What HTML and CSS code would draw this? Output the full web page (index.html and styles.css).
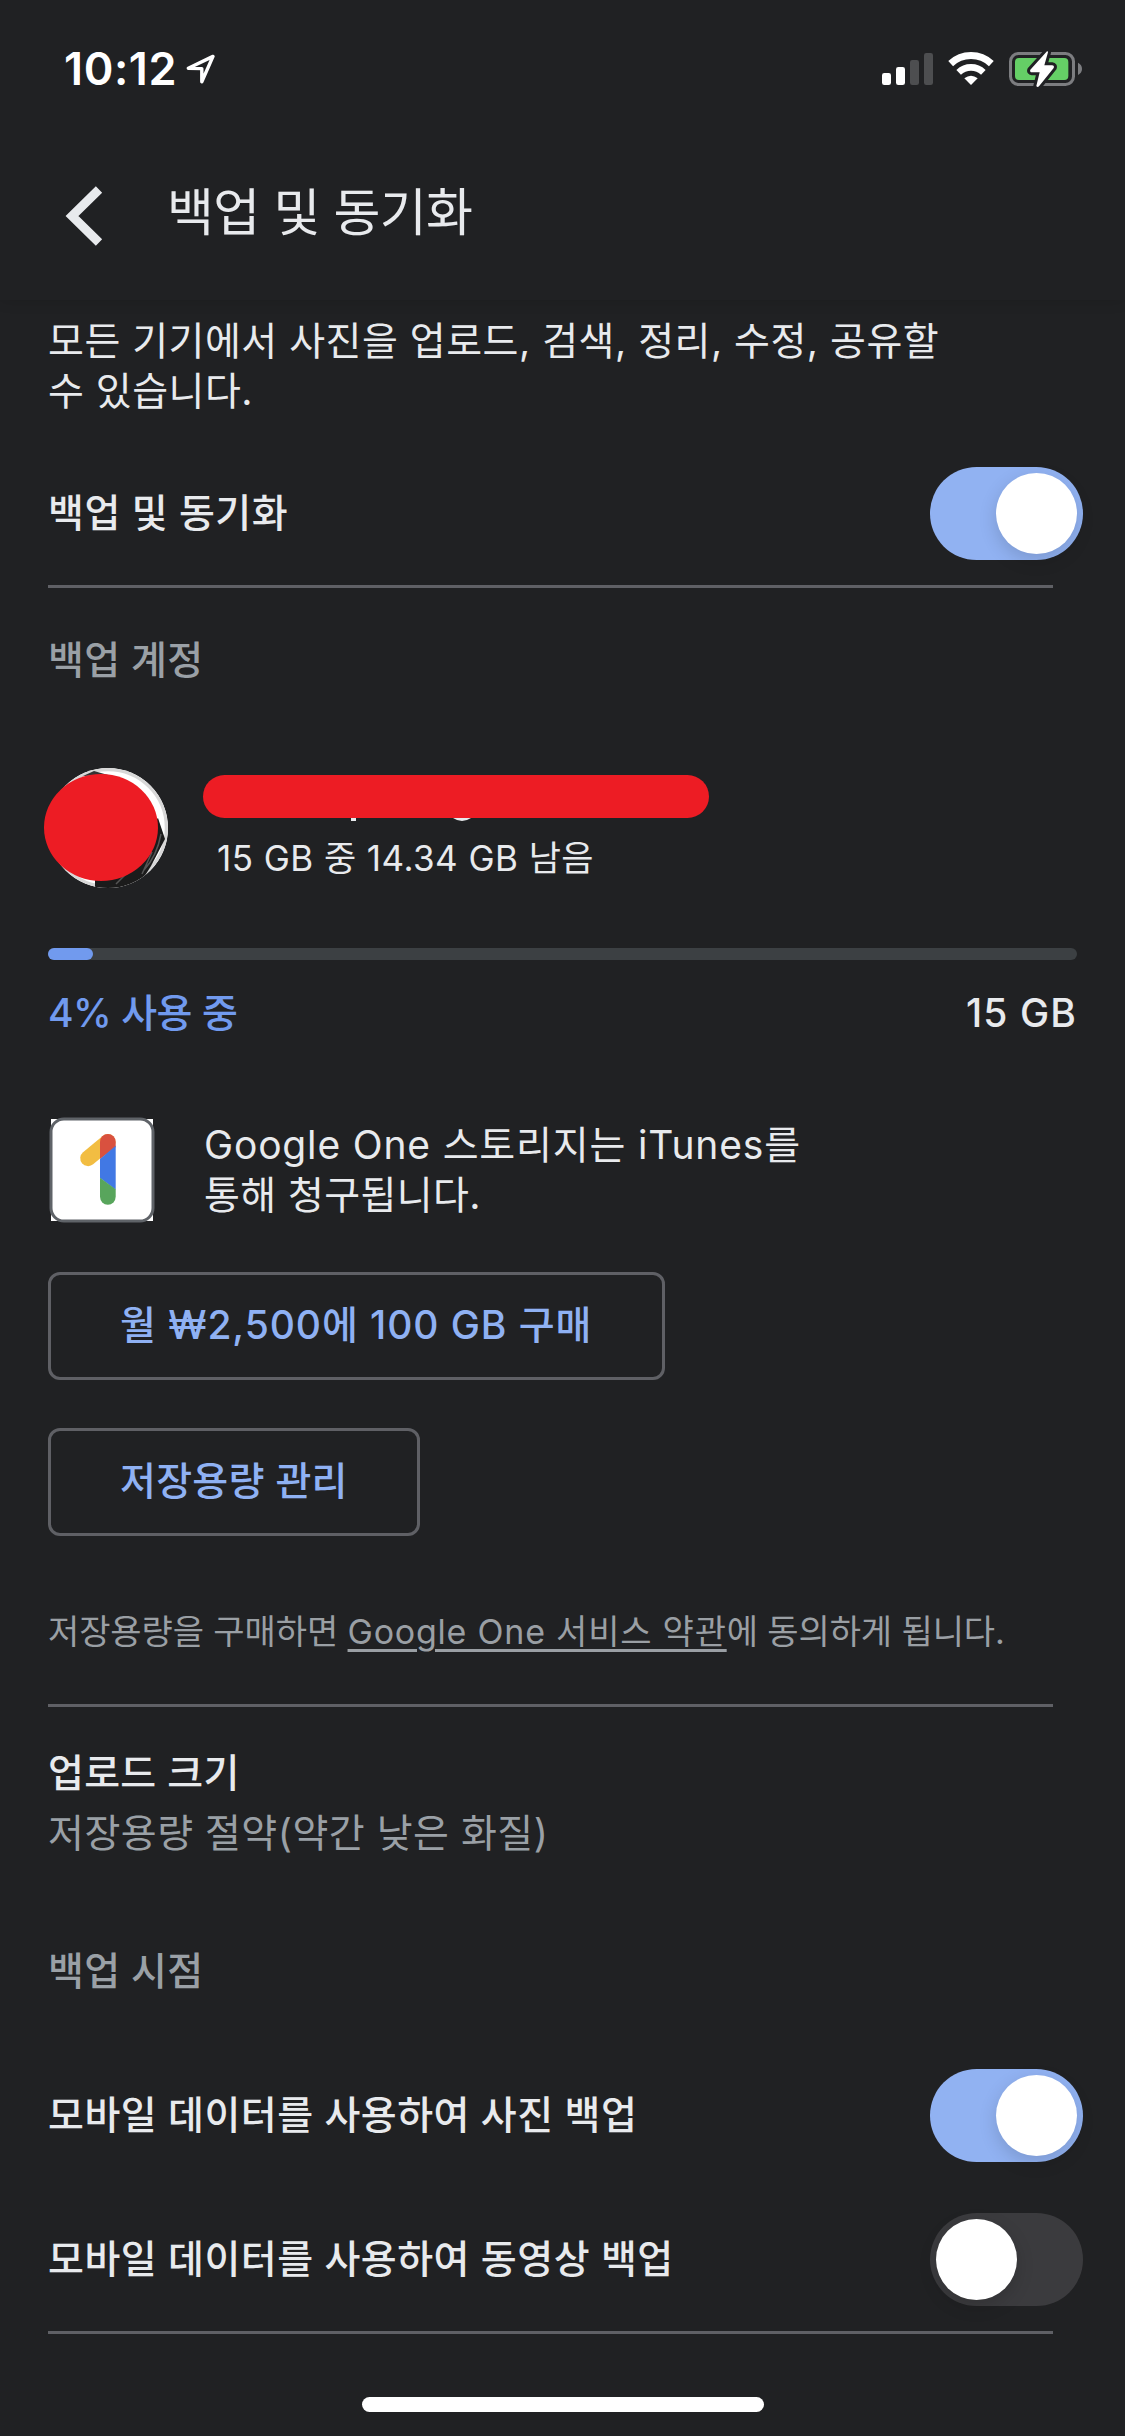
FILE: index.html
```html
<!DOCTYPE html>
<html lang="ko">
<head>
<meta charset="utf-8">
<title>백업 및 동기화</title>
<link rel="stylesheet" href="styles.css">
</head>
<body>
<div class="screen">
  <div class="status-bar">
    <span class="clock">10:12</span>
    <svg class="location" viewBox="0 0 30 30" width="30" height="30"><path d="M2.3 14.2 27 2.4 15.8 27.8V14.6Z" fill="none" stroke="#fff" stroke-width="3.4" stroke-linejoin="round"/></svg>
    <svg class="indicators" viewBox="120 90 612 114" width="204" height="38">
      <g fill="#fff">
        <rect x="126" y="159" width="27" height="36" rx="7"/>
        <rect x="168" y="141" width="27" height="54" rx="7"/>
      </g>
      <g fill="#4d4e50">
        <rect x="210" y="120" width="27" height="75" rx="7"/>
        <rect x="252" y="99" width="27" height="96" rx="7"/>
      </g>
      <g fill="none" stroke="#fff">
        <path d="M332 131A89 89 0 0 1 454 131" stroke-width="21"/>
        <path d="M356 157A54 54 0 0 1 430 157" stroke-width="20"/>
      </g>
      <path d="M393 195 373 175Q393 159 413 175Z" fill="#fff"/>
      <rect x="511.500" y="100.500" width="189" height="93" rx="24" fill="none" stroke="#7c7d80" stroke-width="9"/>
      <path d="M714 128Q726 134 726 146.500T714 165Z" fill="#7c7d80"/>
      <rect x="525" y="114" width="160" height="66" rx="12" fill="#65cf66"/>
      <path d="M621 94 571 149Q568 156 576 157H599L589 198Q592 203 597 199L641 144Q644 137 636 136H613L624 97Q624 93 621 94Z" fill="#fff" stroke="#202124" stroke-width="18" stroke-linejoin="round" paint-order="stroke"/>
    </svg>
  </div>
  <header class="app-bar">
    <svg class="back" viewBox="0 0 38 60" width="38" height="60"><path d="M34 3.500 7 30l27 26.500" fill="none" stroke="#e8eaed" stroke-width="9"/></svg>
    <h1 class="title">백업 및 동기화</h1>
  </header>
  <main class="content">
    <p class="intro">모든 기기에서 사진을 업로드, 검색, 정리, 수정, 공유할<br>수 있습니다.</p>
    <div class="setting">
      <span class="label">백업 및 동기화</span>
      <span class="switch on"></span>
    </div>
    <div class="divider"></div>
    <h2 class="section">백업 계정</h2>
    <div class="account">
      <svg class="avatar" viewBox="0 0 126 120" width="126" height="120">
        <defs><clipPath id="photo"><circle cx="64" cy="60" r="60"/></clipPath></defs>
        <g clip-path="url(#photo)">
          <rect width="126" height="120" fill="#fff"/>
          <circle cx="64" cy="60" r="58.500" fill="none" stroke="#d8d8d8" stroke-width="3.500"/>
          <path d="M114 50 121 71 107 98 92 122H51V112Z" fill="#1b1b1b"/>
          <path d="M117 66Q113 88 100 102M108 84 98 106M84 104 72 116" fill="none" stroke="#555" stroke-width="1.500"/>
          <path d="M39 8 50 3 64 7Z" fill="#333"/>
        </g>
        <ellipse cx="57" cy="59.500" rx="57" ry="53.500" fill="#ed1c24"/>
      </svg>
      <div class="account-text">
        <div class="redacted"></div>
        <svg class="descenders" viewBox="0 0 506 4" width="506" height="4"><path d="M148 0H153V3H148ZM250 0H268Q259 6 250 0Z" fill="#e8eaed"/></svg>
        <div class="quota">15 GB 중 14.34 GB 남음</div>
      </div>
    </div>
    <div class="meter"><div class="meter-fill"></div></div>
    <div class="usage"><span class="used">4% 사용 중</span><span class="total">15 GB</span></div>
    <div class="one">
      <svg class="one-icon" viewBox="0 0 106 106" width="106" height="106">
        <defs>
          <clipPath id="stem"><rect x="51" y="17" width="15.700" height="70.700" rx="7.850"/></clipPath>
        </defs>
        <rect x="2" y="2" width="102" height="102" fill="#fff"/>
        <rect x="2" y="2" width="102" height="102" rx="13" fill="#fff" stroke="#5f6368" stroke-width="3"/>
        <path d="M58.700 24.900 39.100 41.300" stroke="#f2bd42" stroke-width="15.700" stroke-linecap="round"/>
        <g clip-path="url(#stem)">
          <path d="M51 10H67V30L51 42Z" fill="#d9513f"/>
          <path d="M51 42 67 28.500V73L51 61Z" fill="#4178e4"/>
          <path d="M51 60.700 67 72.500V90H51Z" fill="#58a55c"/>
        </g>
      </svg>
      <p class="one-text"><span class="one-lead">Google One 스토리지는 iTunes를</span><br>통해 청구됩니다.</p>
    </div>
    <div class="actions">
      <button class="button buy">월 ₩2,500에 100 GB 구매</button>
      <button class="button">저장용량 관리</button>
    </div>
    <p class="terms">저장용량을 구매하면 <a class="link">Google One 서비스 약관</a>에 동의하게 됩니다.</p>
    <div class="divider"></div>
    <div class="upload">
      <div class="upload-title">업로드 크기</div>
      <div class="upload-value">저장용량 절약(약간 낮은 화질)</div>
    </div>
    <h2 class="section">백업 시점</h2>
    <div class="setting photos">
      <span class="label">모바일 데이터를 사용하여 사진 백업</span>
      <span class="switch on"></span>
    </div>
    <div class="setting">
      <span class="label">모바일 데이터를 사용하여 동영상 백업</span>
      <span class="switch"></span>
    </div>
    <div class="divider"></div>
  </main>
  <div class="home-indicator"></div>
</div>
</body>
</html>
```
FILE: styles.css
```css
* {
  box-sizing: border-box;
  margin: 0;
}

body {
  background: #202123;
  color: #e8eaed;
  font-family: Inter, "Noto Sans CJK KR", sans-serif;
  font-size: 39px;
  line-height: 50px;
  letter-spacing: 0.5px;
}

.screen {
  display: flex;
  flex-direction: column;
  width: 1125px;
  height: 2436px;
  overflow: hidden;
}

.status-bar {
  display: flex;
  align-items: center;
  height: 138px;
  padding: 0 41px 0 64px;
}

.clock {
  color: #fff;
  font-size: 45px;
  font-weight: 600;
  letter-spacing: 0.6px;
}

.location {
  margin-left: 9px;
}

.indicators {
  margin-left: auto;
}

.app-bar {
  display: flex;
  align-items: center;
  gap: 64px;
  height: 162px;
  padding: 0 65px 6px;
  box-shadow: 0 0 14px rgba(0, 0, 0, 0.14);
  clip-path: inset(0 0 -20px);
}

.title {
  padding-bottom: 6px;
  font-size: 51px;
  font-weight: 400;
  letter-spacing: -0.6px;
}

.content {
  padding: 16px 42px 0 48px;
}

.setting {
  display: flex;
  align-items: center;
  justify-content: space-between;
  height: 93px;
  margin-top: 51px;
}

.label,
.upload-title {
  font-weight: 500;
}

.label {
  padding-bottom: 2px;
}

.photos {
  margin-top: 73px;
}

.switch {
  display: flex;
  width: 153px;
  height: 93px;
  padding: 6px;
  border-radius: 47px;
  background: #3b3b3e;
}

.switch.on {
  justify-content: flex-end;
  background: #91b2f2;
}

.switch::before {
  content: "";
  width: 81px;
  height: 81px;
  border-radius: 50%;
  background: #fff;
  box-shadow: 0 6px 18px rgba(0, 0, 0, 0.15);
}

.divider {
  width: 1005px;
  height: 3px;
  margin-top: 25px;
  background: #5f6065;
}

.section {
  margin-top: 47px;
  color: #9aa0a6;
  font-size: 39px;
  font-weight: 500;
  letter-spacing: 0.3px;
}

.account {
  display: flex;
  gap: 33px;
  margin: 83px 0 0 -4px;
}

.redacted {
  width: 506px;
  height: 43px;
  margin-top: 7px;
  border-radius: 22px;
  background: #ed1c24;
}

.descenders {
  display: block;
}

.quota {
  margin: 11px 0 0 14px;
  font-size: 35px;
  letter-spacing: 0.45px;
}

.meter {
  height: 12px;
  margin-top: 60px;
  border-radius: 6px;
  background: #3c4043;
}

.meter-fill {
  width: 45px;
  height: 12px;
  border-radius: 6px;
  background: #719aee;
}

.usage {
  display: flex;
  justify-content: space-between;
  margin-top: 28px;
  font-weight: 500;
}

.meter,
.usage {
  width: 1029px;
}

.used {
  color: #719aee;
  letter-spacing: -0.5px;
}

.total {
  letter-spacing: 1.1px;
}

.one {
  display: flex;
  align-items: center;
  gap: 49px;
  margin: 79px 0 0 1px;
}

.one-text {
  letter-spacing: 0.4px;
}

.one-lead {
  letter-spacing: 0.83px;
}

.actions {
  display: flex;
  flex-direction: column;
  align-items: flex-start;
  gap: 48px;
  margin-top: 49px;
}

.button {
  height: 108px;
  padding: 0 69px 2px;
  border: 3px solid #5f6065;
  border-radius: 12px;
  background: none;
  color: #8fb1f3;
  font: inherit;
  font-weight: 500;
  letter-spacing: 0.3px;
}

.buy {
  padding-right: 70px;
  letter-spacing: 0.93px;
}

.terms {
  margin-top: 71px;
  color: #9a9fa4;
  font-size: 34px;
  letter-spacing: -0.1px;
}

.link {
  letter-spacing: 0.77px;
  text-decoration: underline;
  text-decoration-thickness: 3px;
  text-underline-offset: 5px;
}

.terms + .divider {
  margin-top: 47px;
}

.upload {
  margin-top: 36px;
  line-height: 60px;
}

.upload-title {
  letter-spacing: 0.3px;
}

.upload-value {
  color: #9aa0a6;
}

.upload + .section {
  margin-top: 83px;
}

.home-indicator {
  width: 402px;
  height: 15px;
  margin: 63px auto 0;
  border-radius: 8px;
  background: #fff;
}
```
